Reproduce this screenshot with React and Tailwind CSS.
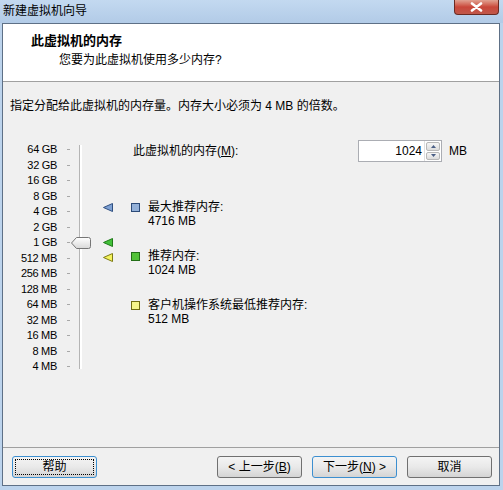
import React from 'react'

const sizes = ['64 GB', '32 GB', '16 GB', '8 GB', '4 GB', '2 GB', '1 GB', '512 MB', '256 MB', '128 MB', '64 MB', '32 MB', '16 MB', '8 MB', '4 MB']

function Arrow({ fill, stroke, className }) {
  return (
    <svg className={className} width="10" height="9" viewBox="0 0 10 9">
      <polygon points="0.5,4.5 9.5,0.5 9.5,8.5" fill={fill} stroke={stroke} strokeWidth="1" strokeLinejoin="round" />
    </svg>
  )
}

function Thumb({ className }) {
  return (
    <svg className={className} width="20" height="12" viewBox="0 0 20 12">
      <defs>
        <linearGradient id="tg" x1="0" y1="0" x2="0" y2="1">
          <stop offset="0" stopColor="#ffffff" />
          <stop offset="1" stopColor="#d8d8d8" />
        </linearGradient>
      </defs>
      <path d="M0.5,6 L5.5,0.5 L17.5,0.5 Q19.5,0.5 19.5,2.5 L19.5,9.5 Q19.5,11.5 17.5,11.5 L5.5,11.5 Z" fill="url(#tg)" stroke="#767676" strokeWidth="1" />
    </svg>
  )
}

function Slider() {
  return (
    <div className="relative w-[128px] shrink-0 pt-[2px]">
      {sizes.map(s => (
        <div key={s} className="flex h-[15.5px] items-center">
          <span className="w-[54px] text-right text-[11px] leading-[15px] tracking-[-0.3px] whitespace-nowrap">{s}</span>
          <span className="ml-[10px] h-px w-[3px] bg-[#a8a8a8]" />
        </div>
      ))}
      <div className="absolute left-[76px] top-[5px] h-[224px] w-[3px] border-l border-[#b4b4b4] bg-white" />
      <Thumb className="absolute left-[68px] top-[97px]" />
      <Arrow className="absolute left-[100px] top-[63px]" fill="#7ea1d3" stroke="#2f4f80" />
      <Arrow className="absolute left-[100px] top-[98px]" fill="#43c13a" stroke="#1f7a18" />
      <Arrow className="absolute left-[100px] top-[113px]" fill="#f4f35c" stroke="#7d7a14" />
    </div>
  )
}

function Legend({ color, border, label, value, className }) {
  return (
    <div className={`flex items-start ${className}`}>
      <span className={`mt-[3px] h-[9px] w-[9px] shrink-0 border ${color} ${border}`} />
      <div className="ml-[8px] leading-[14px]">
        <div>{label}</div>
        <div>{value}</div>
      </div>
    </div>
  )
}

function Button({ children, focus, def }) {
  return (
    <button
      className={`flex h-[22px] w-[85px] items-center justify-center rounded-[3px] border bg-linear-to-b from-[#f4f4f4] via-[#e9e9e9] to-[#d4d4d4] leading-4 ${
        focus || def ? 'border-[#3c8fd0]' : 'border-[#707070]'
      }`}
    >
      <span className={focus ? 'flex h-[16px] w-[79px] items-center justify-center border border-dotted border-black' : ''}>{children}</span>
    </button>
  )
}

export default function App() {
  return (
    <div className="flex h-[490px] w-[503px] flex-col bg-[#bcd3ec] font-['Liberation_Sans','Noto_Sans_CJK_SC',sans-serif] text-[12px] text-black">
      <div className="flex h-[23px] shrink-0 items-start justify-between bg-linear-to-b from-[#c3d9f0] to-[#b2cbe7]">
        <span className="pl-[3px] pt-[3px] leading-4">新建虚拟机向导</span>
        <div className="mr-[4px] flex h-[15px] w-[45px] items-center justify-center rounded-b-[4px] border border-t-0 border-[#6b2a22] bg-linear-to-b from-[#e0a192] via-[#c9463a] to-[#c0584a]">
          <svg width="13" height="10" viewBox="0 0 13 10">
            <path d="M2,1.5 L11,8.5 M11,1.5 L2,8.5" stroke="#ffffff" strokeWidth="2.6" strokeLinecap="round" />
          </svg>
        </div>
      </div>

      <div className="ml-[2px] mr-[3px] flex h-[463px] flex-col border border-[#5e7086] bg-[#f0f0f0]">
        <div className="h-[57px] bg-white">
          <div className="pl-[28px] pt-[9px] text-[13px] font-bold leading-4">此虚拟机的内存</div>
          <div className="mt-[3px] pl-[56px] leading-4">您要为此虚拟机使用多少内存?</div>
        </div>
        <div className="h-px bg-[#a0a0a0]" />

        <div className="h-[365px]">
          <div className="pl-[7px] pt-[16px] leading-4">指定分配给此虚拟机的内存量。内存大小必须为 4 MB 的倍数。</div>
          <div className="mt-[26px] flex">
            <Slider />
            <div className="flex flex-col">
              <div className="flex h-[22px] items-center">
                <span className="w-[227px] pl-[2px]">
                  此虚拟机的内存(<span className="underline">M</span>):
                </span>
                <div className="flex h-[22px] border border-[#abadb3] bg-white">
                  <span className="flex w-[65px] items-center justify-end pr-[2px]">1024</span>
                  <div className="flex w-[17px] flex-col gap-px border-l border-[#e0e0e0] p-px">
                    <span className="flex flex-1 items-center justify-center rounded-[2px] border border-[#b8b8b8] bg-linear-to-b from-[#f6f6f6] to-[#dcdcdc]">
                      <svg width="5" height="3" viewBox="0 0 5 3"><polygon points="2.5,0 5,3 0,3" fill="#4a5f86" /></svg>
                    </span>
                    <span className="flex flex-1 items-center justify-center rounded-[2px] border border-[#b8b8b8] bg-linear-to-b from-[#f6f6f6] to-[#dcdcdc]">
                      <svg width="5" height="3" viewBox="0 0 5 3"><polygon points="0,0 5,0 2.5,3" fill="#4a5f86" /></svg>
                    </span>
                  </div>
                </div>
                <span className="ml-[7px]">MB</span>
              </div>
              <Legend className="mt-[38px]" color="bg-[#93b0d8]" border="border-[#2c4a78]" label="最大推荐内存:" value="4716 MB" />
              <Legend className="mt-[21px]" color="bg-[#52c238]" border="border-[#226e16]" label="推荐内存:" value="1024 MB" />
              <Legend className="mt-[21px]" color="bg-[#f5f58a]" border="border-[#6f6c12]" label="客户机操作系统最低推荐内存:" value="512 MB" />
            </div>
          </div>
        </div>

        <div className="h-px bg-[#a0a0a0]" />
        <div className="flex h-[37px] items-start justify-between pl-[9px] pr-[7px] pt-[8px]">
          <Button focus>帮助</Button>
          <div className="flex gap-[10px]">
            <Button>&lt; 上一步(<span className="underline">B</span>)</Button>
            <Button def>下一步(<span className="underline">N</span>) &gt;</Button>
            <Button>取消</Button>
          </div>
        </div>
      </div>
    </div>
  )
}
